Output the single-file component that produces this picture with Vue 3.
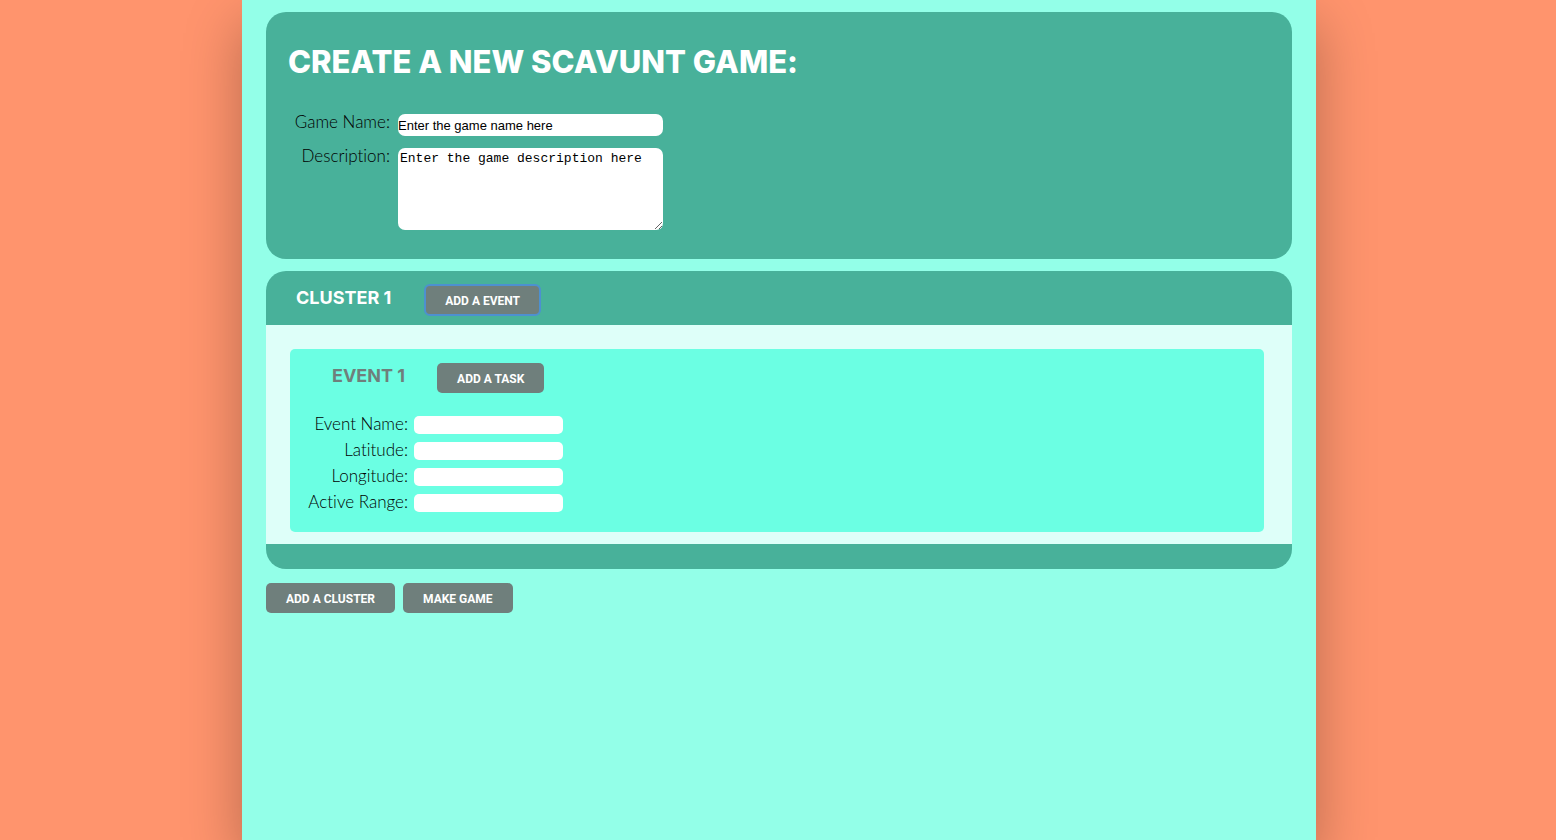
<script setup>
import { ref } from 'vue'

const gameName = ref('Enter the game name here')
const description = ref('Enter the game description here')
const fields = ref([
  { id: 'event-name', label: 'Event Name:', value: '' },
  { id: 'latitude', label: 'Latitude:', value: '' },
  { id: 'longitude', label: 'Longitude:', value: '' },
  { id: 'active-range', label: 'Active Range:', value: '' },
])
</script>

<template>
  <main class="page">
    <section class="game">
      <h1>CREATE A NEW SCAVUNT GAME:</h1>
      <div class="game-form">
        <label for="game-name">Game Name:</label>
        <input id="game-name" v-model="gameName" type="text" />
        <label for="description">Description:</label>
        <textarea id="description" v-model="description"></textarea>
      </div>
    </section>

    <section class="cluster">
      <header class="cluster-head">
        <h2>CLUSTER 1</h2>
        <button type="button" class="active">ADD A EVENT</button>
      </header>
      <div class="cluster-body">
        <article class="event">
          <header class="event-head">
            <h3>EVENT 1</h3>
            <button type="button">ADD A TASK</button>
          </header>
          <div class="event-form">
            <template v-for="field in fields" :key="field.id">
              <label :for="field.id">{{ field.label }}</label>
              <input :id="field.id" v-model="field.value" type="text" />
            </template>
          </div>
        </article>
      </div>
    </section>

    <div class="actions">
      <button type="button">ADD A CLUSTER</button>
      <button type="button">MAKE GAME</button>
    </div>
  </main>
</template>

<style>
body {
  background: #ff946d;
}
</style>

<style scoped>
.page {
  box-sizing: border-box;
  min-height: 100vh;
  margin: 0 240px 0 242px;
  padding: 12px 24px;
  background: #93ffe8;
  box-shadow: 0 24px 54px rgba(0, 0, 0, 0.28);
  font-family: Lato, "Open Sans", sans-serif;
  font-size: 17px;
  font-variant-ligatures: none;
  color: #000;
}

h1,
h2,
h3 {
  margin: 0;
  font-family: Inter, Lato, sans-serif;
  color: #fff;
}

h1 {
  font-size: 31px;
  font-weight: 800;
  line-height: 40px;
}

h2,
h3 {
  font-size: 18px;
  font-weight: 700;
  line-height: 26px;
}

h3 {
  color: #6f7f7c;
}

label {
  font-weight: 300;
  line-height: 16px;
  text-align: right;
  white-space: nowrap;
}

input,
textarea {
  box-sizing: border-box;
  border: 0;
  border-radius: 5px;
  background: #fff;
  color: #000;
  outline: none;
}

input {
  padding: 0;
  font: 13px "Liberation Sans", Arial, sans-serif;
}

.game {
  padding: 30px 22px 29px;
  border-radius: 20px;
  background: #48b19a;
}

.game-form {
  display: grid;
  grid-template-columns: 102px 265px;
  gap: 12px 8px;
  align-items: start;
  margin-top: 32px;
}

.game-form input {
  height: 22px;
  border-radius: 7px;
}

textarea {
  display: block;
  height: 82px;
  padding: 2px;
  border-radius: 7px;
  font: 13px/17px "Liberation Mono", "Courier New", monospace;
}

.cluster {
  margin-top: 12px;
  padding-bottom: 25px;
  border-radius: 20px;
  background: #48b19a;
}

.cluster-head {
  display: flex;
  align-items: flex-start;
  gap: 34px;
  padding: 14px 30px 10px;
}

.cluster-body {
  padding: 24px 28px 12px 24px;
  background: #defff9;
}

.event {
  padding: 14px 18px 20px;
  border-radius: 5px;
  background: #6bffe3;
}

.event-head {
  display: flex;
  align-items: flex-start;
  gap: 32px;
  padding-left: 24px;
}

.event-form {
  display: grid;
  grid-template-columns: 100px 149px;
  gap: 8px 6px;
  margin-top: 23px;
}

.event-form input {
  height: 18px;
}

button {
  height: 30px;
  padding: 2px 20px 0;
  border: 0;
  border-radius: 5px;
  background: #6f7f7c;
  color: #fff;
  font: bold 12px Roboto, "Liberation Sans", sans-serif;
  cursor: pointer;
}

button.active {
  outline: 2px solid #4d90d0;
  outline-offset: -1px;
}

.actions {
  display: flex;
  gap: 8px;
  margin-top: 14px;
}
</style>
